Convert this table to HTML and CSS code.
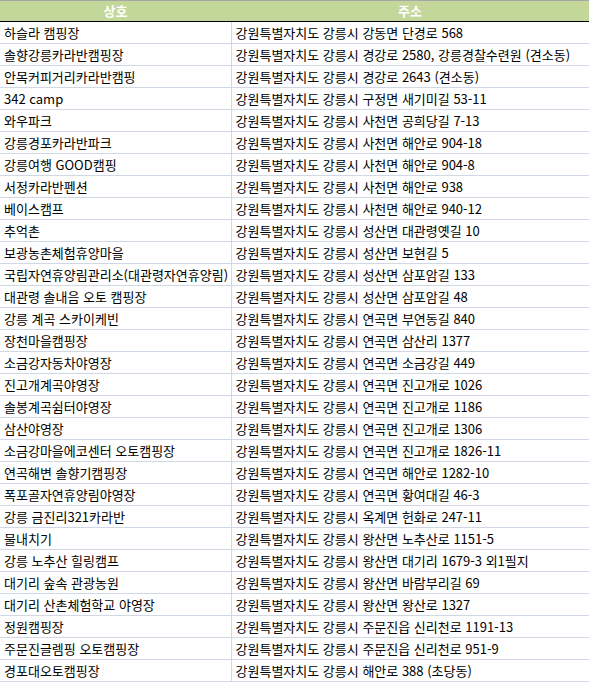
FILE: index.html
```html
<!DOCTYPE html>
<html lang="ko">
<head>
<meta charset="utf-8">
<link rel="stylesheet" href="styles.css">
</head>
<body>
<table class="sheet">
<colgroup><col class="c-name"><col class="c-addr"></colgroup>
<thead>
<tr><th>상호</th><th>주소</th></tr>
</thead>
<tbody>
<tr><td>하슬라 캠핑장</td><td>강원특별자치도 강릉시 강동면 단경로 568</td></tr>
<tr><td>솔향강릉카라반캠핑장</td><td>강원특별자치도 강릉시 경강로 2580, 강릉경찰수련원 (견소동)</td></tr>
<tr><td>안목커피거리카라반캠핑</td><td>강원특별자치도 강릉시 경강로 2643 (견소동)</td></tr>
<tr><td>342 camp</td><td>강원특별자치도 강릉시 구정면 새기미길 53-11</td></tr>
<tr><td>와우파크</td><td>강원특별자치도 강릉시 사천면 공희당길 7-13</td></tr>
<tr><td>강릉경포카라반파크</td><td>강원특별자치도 강릉시 사천면 해안로 904-18</td></tr>
<tr><td>강릉여행 GOOD캠핑</td><td>강원특별자치도 강릉시 사천면 해안로 904-8</td></tr>
<tr><td>서정카라반펜션</td><td>강원특별자치도 강릉시 사천면 해안로 938</td></tr>
<tr><td>베이스캠프</td><td>강원특별자치도 강릉시 사천면 해안로 940-12</td></tr>
<tr><td>추억촌</td><td>강원특별자치도 강릉시 성산면 대관령옛길 10</td></tr>
<tr><td>보광농촌체험휴양마을</td><td>강원특별자치도 강릉시 성산면 보현길 5</td></tr>
<tr><td>국립자연휴양림관리소(대관령자연휴양림)</td><td>강원특별자치도 강릉시 성산면 삼포암길 133</td></tr>
<tr><td>대관령 솔내음 오토 캠핑장</td><td>강원특별자치도 강릉시 성산면 삼포암길 48</td></tr>
<tr><td>강릉 계곡 스카이케빈</td><td>강원특별자치도 강릉시 연곡면 부연동길 840</td></tr>
<tr><td>장천마을캠핑장</td><td>강원특별자치도 강릉시 연곡면 삼산리 1377</td></tr>
<tr><td>소금강자동차야영장</td><td>강원특별자치도 강릉시 연곡면 소금강길 449</td></tr>
<tr><td>진고개계곡야영장</td><td>강원특별자치도 강릉시 연곡면 진고개로 1026</td></tr>
<tr><td>솔봉계곡쉼터야영장</td><td>강원특별자치도 강릉시 연곡면 진고개로 1186</td></tr>
<tr><td>삼산야영장</td><td>강원특별자치도 강릉시 연곡면 진고개로 1306</td></tr>
<tr><td>소금강마을에코센터 오토캠핑장</td><td>강원특별자치도 강릉시 연곡면 진고개로 1826-11</td></tr>
<tr><td>연곡해변 솔향기캠핑장</td><td>강원특별자치도 강릉시 연곡면 해안로 1282-10</td></tr>
<tr><td>폭포골자연휴양림야영장</td><td>강원특별자치도 강릉시 연곡면 황여대길 46-3</td></tr>
<tr><td>강릉 금진리321카라반</td><td>강원특별자치도 강릉시 옥계면 헌화로 247-11</td></tr>
<tr><td>물내치기</td><td>강원특별자치도 강릉시 왕산면 노추산로 1151-5</td></tr>
<tr><td>강릉 노추산 힐링캠프</td><td>강원특별자치도 강릉시 왕산면 대기리 1679-3 외1필지</td></tr>
<tr><td>대기리 숲속 관광농원</td><td>강원특별자치도 강릉시 왕산면 바람부리길 69</td></tr>
<tr><td>대기리 산촌체험학교 야영장</td><td>강원특별자치도 강릉시 왕산면 왕산로 1327</td></tr>
<tr><td>정원캠핑장</td><td>강원특별자치도 강릉시 주문진읍 신리천로 1191-13</td></tr>
<tr><td>주문진글렘핑 오토캠핑장</td><td>강원특별자치도 강릉시 주문진읍 신리천로 951-9</td></tr>
<tr><td>경포대오토캠핑장</td><td>강원특별자치도 강릉시 해안로 388 (초당동)</td></tr>
</tbody>
</table>
</body>
</html>
```
FILE: styles.css
```css
html, body {
  margin: 0;
  padding: 0;
  background: #ffffff;
}

.sheet {
  border-collapse: collapse;
  table-layout: fixed;
  width: 589px;
  font-family: "Noto Sans CJK KR", "Noto Sans", sans-serif;
  font-size: 13px;
  color: #000000;
}

.c-name { width: 231px; }
.c-addr { width: 358px; }

.sheet th {
  height: 20px;
  padding: 0;
  background: #c4d79b;
  color: #ffffff;
  font-weight: bold;
  font-size: 13px;
  text-align: center;
  border-top: 1px solid #a6a6a6;
  border-bottom: 1px solid #000000;
  line-height: 20px;
}

.sheet td {
  height: 21px;
  padding: 0 0 0 4px;
  border: 1px solid #d0d7e5;
  line-height: 21px;
  white-space: nowrap;
  overflow: hidden;
}

.sheet td:first-child { border-left: none; }
```
